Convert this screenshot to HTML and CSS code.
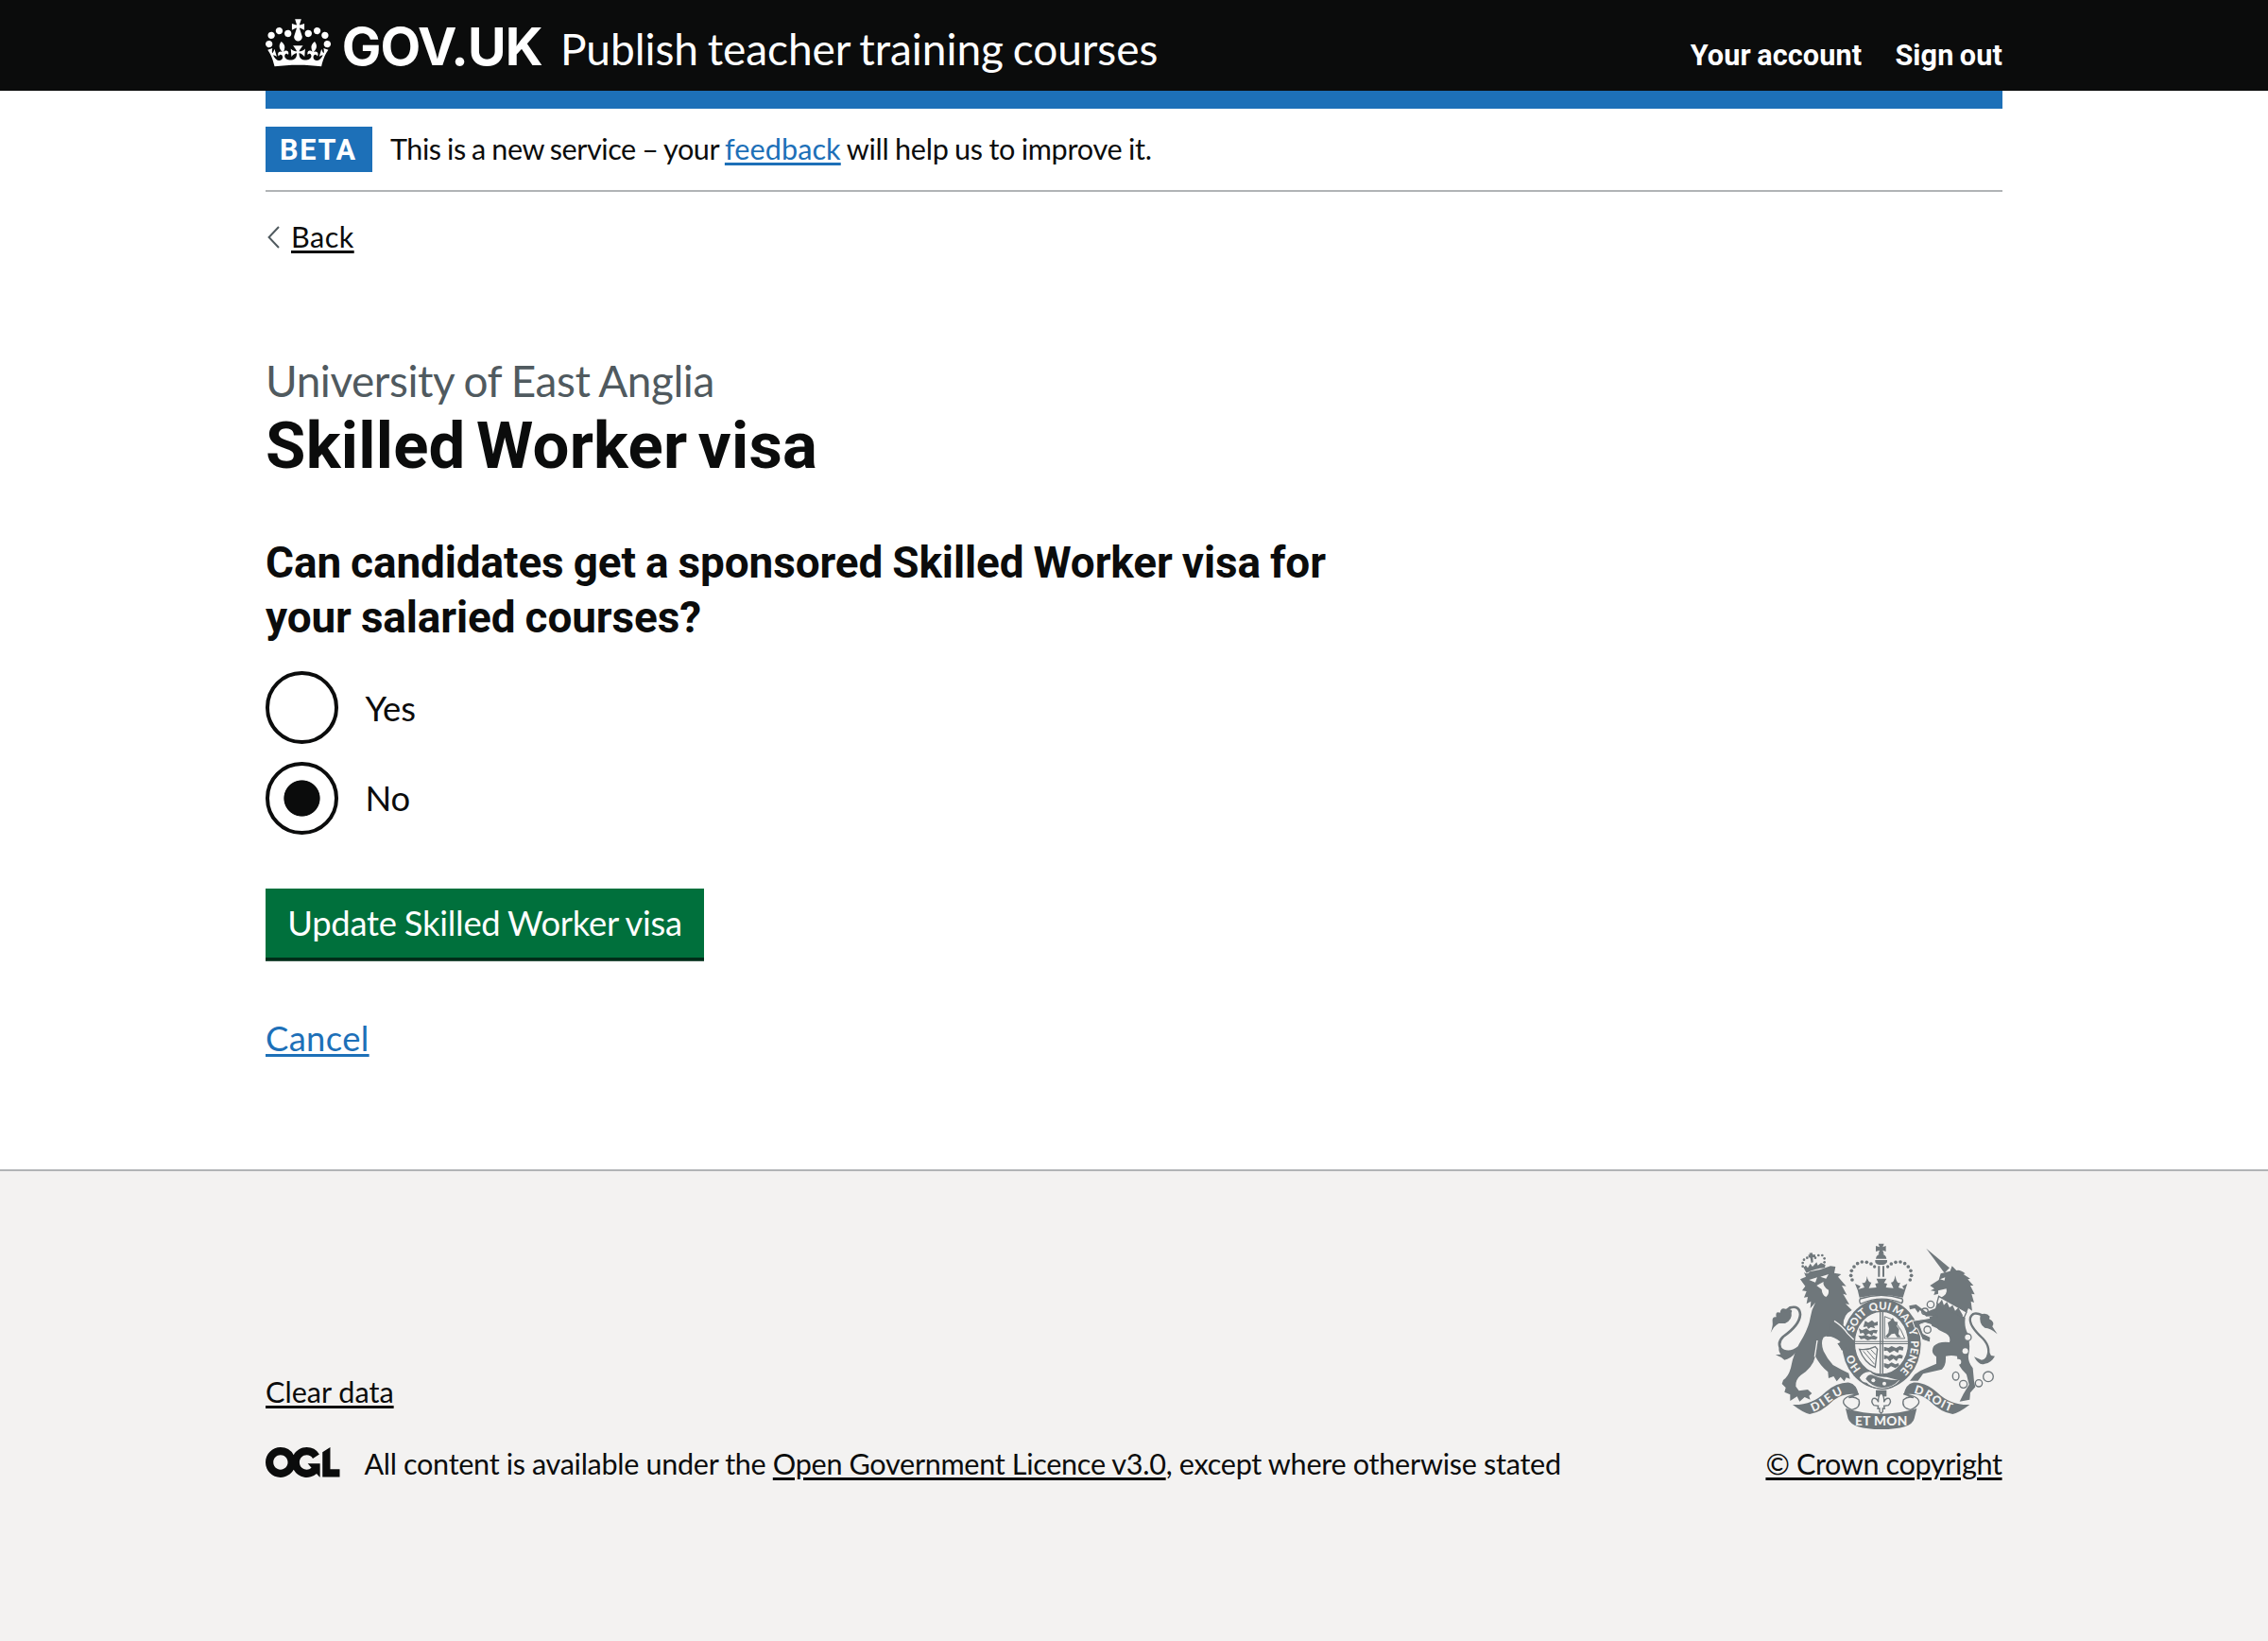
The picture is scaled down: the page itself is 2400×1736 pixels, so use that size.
FILE: index.html
```
<!DOCTYPE html>
<html lang="en">
<head>
<meta charset="utf-8">
<title>Skilled Worker visa - Publish teacher training courses - GOV.UK</title>
<link rel="stylesheet" href="styles.css">
</head>
<body>
<header class="header">
  <div class="container header-row">
    <svg class="header-crown" viewBox="0 0 132 97" aria-hidden="true"><path fill="currentColor" d="M25 30.2c3.5 1.5 7.7-.2 9.1-3.7 1.5-3.6-.2-7.8-3.9-9.2-3.6-1.4-7.6.3-9.1 3.9-1.4 3.5.3 7.5 3.9 9zM9 39.5c3.6 1.5 7.8-.2 9.2-3.7 1.5-3.6-.2-7.8-3.9-9.1-3.6-1.5-7.6.2-9.1 3.8-1.4 3.5.3 7.5 3.8 9zM4.4 57.2c3.5 1.5 7.7-.2 9.1-3.8 1.5-3.6-.2-7.7-3.9-9.1-3.5-1.5-7.6.3-9.1 3.8-1.4 3.5.3 7.6 3.9 9.1zm38.3-21.4c3.5 1.5 7.7-.2 9.1-3.8 1.5-3.6-.2-7.7-3.9-9.1-3.6-1.5-7.6.3-9.1 3.8-1.3 3.6.4 7.7 3.9 9.1zm64.4-5.6c-3.6 1.5-7.8-.2-9.1-3.7-1.5-3.6.2-7.8 3.8-9.2 3.6-1.4 7.7.3 9.2 3.9 1.3 3.5-.4 7.5-3.9 9zm15.9 9.3c-3.6 1.5-7.7-.2-9.1-3.7-1.5-3.6.2-7.8 3.7-9.1 3.6-1.5 7.7.2 9.2 3.8 1.5 3.5-.3 7.5-3.8 9zm4.7 17.7c-3.6 1.5-7.8-.2-9.2-3.8-1.5-3.6.2-7.7 3.9-9.1 3.6-1.5 7.7.3 9.2 3.8 1.3 3.5-.4 7.6-3.9 9.1zM89.3 35.8c-3.6 1.5-7.8-.2-9.2-3.8-1.4-3.6.2-7.7 3.9-9.1 3.6-1.5 7.7.3 9.2 3.8 1.4 3.6-.3 7.7-3.9 9.1zM69.7 17.7l8.9 4.7V9.3l-8.9 2.8c-.2-.3-.5-.6-.9-.9L72.4 0H59.6l3.5 11.2c-.3.3-.6.5-.9.9l-8.8-2.8v13.1l8.8-4.7c.3.3.6.7.9.9l-5 15.4v.1c-.2.8-.4 1.6-.4 2.4 0 4.1 3.1 7.5 7 8.1h.2c.3 0 .7.1 1 .1.4 0 .7 0 1-.1h.2c4-.6 7.1-4.1 7.1-8.1 0-.8-.1-1.7-.4-2.4V34l-5.1-15.4c.4-.2.7-.6 1-.9zM66 92.8c16.9 0 32.8 1.1 47.1 3.2 4-16.9 8.9-26.7 14-33.5l-9.6-3.4c1 4.9 1.1 7.2 0 10.2-1.5-1.4-3-4.3-4.2-8.7L108.6 76c2.8-2 5-3.2 7.5-3.3-4.4 9.4-10 11.9-13.6 11.2-4.3-.8-6.3-4.6-5.6-7.9 1-4.7 5.7-5.9 8-.5 4.3-8.7-3-11.4-7.6-8.8 7.1-7.2 7.9-13.5 2.1-21.1-8 6.1-8.1 12.3-4.5 20.8-4.7-5.4-12.1-2.5-9.5 6.2 3.4-5.2 7.9-2 7.2 3.1-.6 4.3-6.4 7.8-13.5 7.2-10.3-.9-10.9-8-11.2-13.8 2.5-.5 7.1 1.8 11 7.3L80.2 60c-4.1 4.4-8 5.3-12.3 5.4 1.4-4.4 8-11.6 8-11.6H55.5s6.4 7.2 7.9 11.6c-4.2-.1-8-1-12.3-5.4l1.4 16.4c3.9-5.5 8.5-7.7 10.9-7.3-.3 5.8-.9 12.8-11.1 13.8-7.2.6-12.9-2.9-13.5-7.2-.7-5 3.8-8.3 7.1-3.1 2.7-8.7-4.6-11.6-9.4-6.2 3.7-8.5 3.6-14.7-4.6-20.8-5.8 7.6-5 13.9 2.2 21.1-4.7-2.6-11.9.1-7.7 8.8 2.3-5.5 7.1-4.2 8.1.5.7 3.3-1.3 7.1-5.7 7.9-3.5.7-9-1.8-13.5-11.2 2.5.1 4.7 1.3 7.5 3.3l-4.7-15.4c-1.2 4.4-2.7 7.2-4.3 8.7-1.1-3-.9-5.3 0-10.2l-9.5 3.4c5 6.9 9.9 16.7 14 33.5 14.8-2.1 30.8-3.2 47.7-3.2z"/></svg>
    <a class="header-logotype" href="#">GOV.UK</a>
    <a class="header-service" href="#">Publish teacher training courses</a>
    <nav class="header-nav">
      <a href="#">Your account</a>
      <a href="#">Sign out</a>
    </nav>
  </div>
</header>

<div class="container">
  <div class="header-bar"></div>
  <div class="phase">
    <strong class="phase-tag">BETA</strong>
    <span class="phase-text"><span>This is a new service – your </span><a class="link" href="#">feedback</a><span class="phase-end"> will help us to improve it.</span></span>
  </div>
  <a class="back" href="#">
    <svg class="back-icon" viewBox="0 0 13 24" aria-hidden="true"><path d="M12 1 L1.6 12 L12 23" fill="none" stroke="#505a5f" stroke-width="2"/></svg>
    <span class="back-text">Back</span>
  </a>

  <main class="main">
    <span class="caption">University of East Anglia</span>
    <h1 class="heading">Skilled Worker visa</h1>
    <form>
      <fieldset class="fieldset">
        <legend class="legend">Can candidates get a sponsored Skilled Worker visa for<br>your salaried courses?</legend>
        <div class="radios">
          <label class="radio"><input class="radio-input" type="radio" name="visa"><span class="radio-label">Yes</span></label>
          <label class="radio"><input class="radio-input" type="radio" name="visa" checked><span class="radio-label">No</span></label>
        </div>
      </fieldset>
      <button class="button" type="button">Update Skilled Worker visa</button>
      <p class="cancel"><a class="link" href="#">Cancel</a></p>
    </form>
  </main>
</div>

<footer class="footer">
  <div class="container footer-row">
    <div class="footer-meta">
      <a class="footer-link clear" href="#">Clear data</a>
      <div class="licence">
        <svg class="licence-logo" viewBox="0 0 483.2 195.7" aria-hidden="true"><path fill="currentColor" d="M421.5 142.8V.1l-50.7 32.3v161.1h112.4v-50.7zm-122.3-9.6A47.12 47.12 0 0 1 221 97.8c0-26 21.1-47.1 47.1-47.1 16.7 0 31.4 8.7 39.7 21.8l42.7-27.2A97.63 97.63 0 0 0 268.1 0c-36.5 0-68.3 20.1-85.1 49.7A98 98 0 0 0 97.8 0C43.9 0 0 43.9 0 97.8s43.9 97.8 97.8 97.8c36.5 0 68.3-20.1 85.1-49.7a97.76 97.76 0 0 0 149.6 25.4l19.4 22.2h3v-87.8h-80l24.3 27.5zM97.8 145c-26 0-47.1-21.1-47.1-47.1s21.1-47.1 47.1-47.1 47.1 21.1 47.1 47.1S123.8 145 97.8 145"/></svg>
        <span class="licence-text"><span>All content is available under the </span><a class="footer-link" href="#">Open Government Licence v3.0</a><span class="licence-end">, except where otherwise stated</span></span>
      </div>
    </div>
    <div class="copyright">
      <svg class="crest" viewBox="70 40 724 600" aria-hidden="true">
        <defs>
          <path id="garter" d="M424 472 A94 109 0 0 1 424 254 A94 109 0 0 1 424 472"/>
          <path id="scroll-left" d="M206 578 C240 570 262 537 308 520"/>
          <path id="scroll-right" d="M526 520 C568 525 598 570 658 581"/>
        </defs>
        <!-- lion -->
        <g class="ink">
          <path d="M166 158 L184 150 L178 136 Q190 144 196 134 Q230 130 262 116 L278 118 L274 138 L296 142 L286 150 L312 180 L298 178 L314 208 L302 204 L322 238 L310 236 L330 256 Q302 270 303 304 L326 324 L342 352 L340 386 L326 374 L322 390 L312 374 L300 384 L284 362 L296 358 Q262 330 240 342 Q230 358 240 386 Q250 408 270 430 L296 444 L320 456 L324 474 L312 470 L306 482 L294 468 L282 482 L272 466 L256 472 L254 452 Q228 430 214 402 Q206 438 168 462 Q150 476 152 498 L162 512 L190 508 L203 520 L194 528 L198 540 L180 532 L164 546 L156 530 L134 544 L134 524 L116 516 L120 502 L108 490 L112 478 Q128 468 136 440 Q144 390 176 340 Q194 306 198 280 Q202 254 214 232 L198 250 L200 228 L186 236 L190 214 L178 216 L186 196 L172 194 L182 180 Z"/>
          <path d="M72 328 Q80 306 78 292 Q76 276 90 278 Q86 258 102 264 Q104 246 120 252 Q146 252 138 264 Q142 286 118 298 L98 298 Q84 304 72 328Z"/>
          <path d="M88 398 L104 396 Q92 378 104 372 Q126 396 160 370 L154 388 Q134 412 116 414 L106 406 Z"/>
        </g>
        <path class="line" stroke-width="8" d="M112 392 Q88 362 112 340 Q164 304 166 270 Q164 240 134 248 L116 262"/>
        <path class="paper" d="M194 160 L220 152 L214 168 Z M230 150 L256 142 L248 156 Z M218 178 L240 166 Q236 180 256 192 Q258 206 248 214 Q236 210 234 190 Z"/>
        <path class="paper-line" stroke-width="4" d="M220 352 Q216 380 212 404"/>
        <g class="ink">
          <circle cx="174" cy="106" r="4"/><circle cx="174" cy="117" r="4"/><circle cx="178" cy="96" r="4"/><circle cx="188" cy="90" r="4"/><circle cx="214" cy="90" r="4"/><circle cx="224" cy="82" r="4"/><circle cx="236" cy="82" r="4"/><circle cx="243" cy="92" r="4"/><circle cx="243" cy="104" r="4"/>
          <path d="M194 75 L204 74 L206 80 L214 80 L214 88 L206 88 L207 104 L201 106 L198 90 L192 88 L192 80 L197 80 Z"/>
          <path d="M176 120 L184 114 L190 122 L198 108 L205 118 L218 104 L222 114 L232 106 L246 112 L244 122 Q212 124 186 138 Z"/>
        </g>
        <!-- unicorn -->
        <g class="ink">
          <path d="M566 60 L640 122 L624 138 Z"/>
          <path d="M578 178 L606 160 L612 140 L642 132 L644 126 L648 116 L662 130 Q674 126 690 140 L684 142 L706 156 L698 158 L716 178 L706 178 L720 206 L710 204 L718 232 L708 228 L712 258 L700 250 L694 264 L610 218 Q636 206 630 188 L604 194 L604 204 L590 208 L594 196 L580 194 L592 188 Z"/>
          <path d="M600 234 L690 280 Q686 310 698 330 Q708 370 700 400 Q698 420 714 440 L718 482 L722 500 L706 518 L704 540 L672 546 L684 522 L702 492 L694 460 Q664 432 664 402 Q646 398 628 402 Q630 430 616 444 L556 458 L540 480 L514 480 L530 460 L548 448 L598 426 L598 404 Q578 390 590 370 Q606 354 640 358 Q646 336 620 326 Q586 312 586 280 Z"/>
          <path d="M738 270 Q758 262 768 276 L766 284 Q786 294 776 308 Q782 318 792 332 Q770 312 752 312 Q732 300 738 270Z"/>
          <path d="M718 404 L742 414 Q760 410 764 384 L772 400 L784 402 Q772 424 752 426 Q734 434 718 404Z"/>
        </g>
        <path class="line" stroke-width="7" d="M756 414 Q776 378 746 346 Q700 304 706 280 Q714 258 744 272"/>
        <path class="paper" d="M610 158 L626 152 L624 162 Z"/>
        <path class="crest-both" d="M606 212 L694 262 L686 280 L600 234 Z"/>
        <path class="ink" d="M606 236 L616 222 L622 240 L632 230 L640 248 L650 240 L658 258 L668 248 L682 272 L680 280 Z"/>
        <g class="crest-both"><circle cx="580" cy="238" r="11"/><circle cx="562" cy="260" r="10"/><circle cx="570" cy="318" r="11"/><circle cx="698" cy="342" r="11"/><ellipse cx="660" cy="465" rx="10" ry="13"/><circle cx="684" cy="491" r="12"/><circle cx="733" cy="488" r="11"/><circle cx="763" cy="467" r="16"/></g>
        <g class="paper"><circle cx="690" cy="386" r="9"/><circle cx="668" cy="420" r="9"/></g>
        <!-- garter and shield -->
        <ellipse class="ink" cx="424" cy="363" rx="125" ry="143"/>
        <g class="crest-letters" font-size="34">
          <text text-anchor="middle"><textPath href="#garter" startOffset="100">HO</textPath></text>
          <text text-anchor="middle"><textPath href="#garter" startOffset="233">SOIT</textPath></text>
          <text text-anchor="middle"><textPath href="#garter" startOffset="314">QUI</textPath></text>
          <text text-anchor="middle"><textPath href="#garter" startOffset="388">MAL</textPath></text>
          <text text-anchor="middle"><textPath href="#garter" startOffset="443">Y</textPath></text>
          <text text-anchor="middle"><textPath href="#garter" startOffset="521">PENSE</textPath></text>
        </g>
        <ellipse class="crest-both" cx="424" cy="360" rx="86" ry="100"/>
        <g class="ink">
          <path d="M418 262 h4 v196 h-4z M426 262 h4 v196 h-4z M340 354 h168 v3 h-168z M340 361 h168 v3 h-168z"/>
          <path d="M372 290 l10 6 12-8 8 8 10-4 0 12-12 2 4 8-14-4-8 6-4-8-12 2z M352 314 l10 6 14-6 10 8 14-4 12 2-4 10-10-2-4 10-10-8-12 6-6-8-10 2z M350 336 l12 2 12-4 12 6 14-4 12 6-6 8-14-2-12 4-10-6-12 2z"/>
          <path d="M444 296 l8-6 8-10 6 12 10 2-4 12 8 10-2 16 8 10-12 0-8-12-10 2-12 12-8-4 10-12 2-14z"/>
          <path d="M432 372 l14 4 10-6 14 6 12-6 12 4-2 10-12-2-4 10-12-8-14 8-8-8-10 2z M432 398 l14 4 10-6 14 6 12-6 10 4-2 10-12-2-6 10-10-8-12 8-8-8-10 2z M432 424 l14 4 10-6 12 6 10-4 2 8-12 8-14-6-10 8-12-6z"/>
        </g>
        <path class="line" stroke-width="4" d="M354 380 Q380 384 404 372 L411 380 L404 438 Q370 424 354 380Z"/>
        <path class="line" stroke-width="3" d="M366 386 L402 428 M378 384 L402 412 M390 381 L406 398"/>
        <path class="line" stroke-width="3" d="M434 276 Q476 286 498 346 H434 Z"/>
        <!-- forepaw and hooves laid over the garter -->
        <path class="ink" d="M264 292 Q296 308 312 330 L332 350 L336 384 L326 374 L320 388 L310 374 L298 384 L288 364 L296 352 Q280 336 250 340 Z"/>
        <path class="paper-line" stroke-width="4" d="M274 290 Q302 308 316 330 L336 350"/>
        <g class="ink">
          <path d="M512 242 L534 238 L566 262 L596 250 L604 274 L566 276 L546 256 L540 264 L530 250 L514 254 Z"/>
          <path class="crest-over" d="M522 290 L548 286 L586 280 L594 306 L562 296 L546 302 L556 330 L580 342 L578 358 L554 350 L538 314 L530 312 Z"/>
          <path d="M576 278 L600 270 L606 316 L584 306 Z"/>
        </g>
        <!-- buckle and strap -->
        <path class="crest-both" d="M352 470 Q366 446 390 450 Q402 468 440 466 L486 478 Q460 508 424 506 Q388 502 376 488 Q360 488 352 470Z"/>
        <path class="ink" d="M374 474 Q384 454 400 464 Q430 478 480 478 Q456 504 424 502 Q392 498 374 474Z"/>
        <g class="paper"><circle cx="398" cy="479" r="6"/><circle cx="433" cy="489" r="6"/></g>
        <!-- crown -->
        <g class="ink">
          <path d="M414 45 h18 l-4 11 10-4 v18 l-10-4 4 12 h-18 l4-12 -12 4 v-18 l12 4z M423 77 Q438 80 440 93 H406 Q408 80 423 77Z M404 97 h38 v7 q-6 8-12 8 h-14 q-8 0-12-8z M413 116 h6 v34 h-6z M427 116 h6 v34 h-6z"/>
          <path d="M340 172 L358 180 L350 190 L370 184 L362 168 Q376 176 378 148 Q382 170 392 168 L384 186 L408 184 L404 172 L414 170 L408 156 L440 156 L432 170 L442 172 L438 184 L462 186 L454 168 Q464 170 468 146 Q472 176 484 168 L478 184 L496 190 L490 180 L506 172 Q500 190 492 216 Q424 202 354 216 Q350 192 340 172Z"/>
          <circle cx="331" cy="160" r="5.5"/><circle cx="327" cy="146" r="5.5"/><circle cx="329" cy="131" r="5.5"/><circle cx="337" cy="118" r="5.5"/><circle cx="348" cy="108" r="5.5"/><circle cx="362" cy="103" r="5.5"/><circle cx="377" cy="104" r="5.5"/><circle cx="391" cy="109" r="5.5"/><circle cx="402" cy="118" r="5"/>
          <circle cx="515" cy="160" r="5.5"/><circle cx="519" cy="146" r="5.5"/><circle cx="517" cy="131" r="5.5"/><circle cx="509" cy="118" r="5.5"/><circle cx="498" cy="108" r="5.5"/><circle cx="484" cy="103" r="5.5"/><circle cx="469" cy="104" r="5.5"/><circle cx="455" cy="109" r="5.5"/><circle cx="444" cy="118" r="5"/>
        </g>
        <path class="crest-both" d="M356 220 Q424 198 490 220 Q494 228 488 234 Q424 206 358 236 Q352 228 356 220Z"/>
        <!-- motto scroll -->
        <path class="crest-both" d="M352 522 Q296 530 304 552 Q312 566 330 572 Q360 566 352 540 Q338 528 320 534 Z M494 522 Q550 530 542 552 Q534 566 516 572 Q486 566 494 540 Q508 528 526 534 Z"/>
        <path class="ink" d="M142 556 Q204 558 246 516 Q284 484 322 486 Q344 490 352 524 L330 522 Q296 522 272 542 Q232 582 196 586 Q176 582 142 556Z"/>
        <path class="ink" d="M704 556 Q642 558 600 516 Q562 484 524 486 Q502 490 494 524 L516 522 Q550 522 574 542 Q614 582 650 586 Q670 582 704 556Z"/>
        <path class="ink" d="M310 568 Q424 602 536 568 L528 600 Q520 634 423 634 Q330 634 318 600 Z"/>
        <g class="crest-letters" font-size="37">
          <text><textPath href="#scroll-left" textLength="112">DIEU</textPath></text>
          <text><textPath href="#scroll-right" textLength="132">DROIT</textPath></text>
          <text x="423" y="623" font-size="41" text-anchor="middle" textLength="166">ET MON</text>
        </g>
        <path class="ink" d="M406 510 h34 v20 h-34z"/>
        <path class="crest-both" d="M423 518 Q434 530 432 548 Q436 534 448 536 Q458 546 446 558 L432 560 L434 568 H428 L428 578 L423 584 L418 578 V568 H412 L414 560 L400 558 Q388 546 398 536 Q410 534 414 548 Q412 530 423 518Z"/>
      </svg>
      <a class="footer-link crown-link" href="#">© Crown copyright</a>
    </div>
  </div>
</footer>
</body>
</html>
```
FILE: styles.css
```
* { box-sizing: border-box; }

body {
  margin: 0;
  min-height: 1736px;
  display: flex;
  flex-direction: column;
  background: #fff;
  color: #0b0c0c;
  font-family: Lato, Roboto, sans-serif;
  font-size: 30.6px;
  line-height: 47.8px;
}

.container { width: 1838px; margin: 0 auto; }

.link { color: #1d70b8; }

.link,
.back-text,
.footer-link {
  text-decoration: underline;
  text-decoration-thickness: 2.6px;
  text-underline-offset: 2.8px;
}

/* Header */
.header { height: 95.7px; background: #0b0c0c; color: #fff; }
.header-row { display: flex; align-items: baseline; padding-top: 23.6px; }
.header a { color: #fff; text-decoration: none; line-height: 50px; white-space: pre; }
.header-crown { width: 69px; height: 51px; align-self: flex-start; margin-top: -3.3px; }
.header-logotype { margin-left: 11.7px; width: 231.3px; font: 700 55.5px Inter, sans-serif; letter-spacing: -.9px; }
.header-service { font-size: 46px; letter-spacing: -.05px; word-spacing: -2px; }
.header-nav { display: flex; gap: 35px; margin-left: auto; font: 700 30.6px Roboto, sans-serif; letter-spacing: .15px; word-spacing: -1.5px; }

/* Phase banner */
.header-bar { height: 19.3px; background: #1d70b8; }
.phase { display: flex; align-items: flex-start; gap: 19px; padding: 19px 0; border-bottom: 2px solid #b1b4b6; }
.phase-tag { width: 113px; height: 48px; padding-left: 15px; background: #1d70b8; color: #fff; font: 700 30.6px/49px Roboto, sans-serif; letter-spacing: 1.7px; }
.phase-text { padding-top: .5px; letter-spacing: -.45px; word-spacing: -1px; line-height: 47px; white-space: pre; }
.phase-text .link { letter-spacing: .09px; }
.phase-end { letter-spacing: -.27px; }

.back { display: flex; width: max-content; align-items: center; margin-top: 23.8px; color: #0b0c0c; text-decoration: none; letter-spacing: .45px; }
.back-icon { width: 13px; height: 24px; margin: 0 12px 0 2px; }

/* Page content */
.main { padding-top: 99.4px; }
.caption { display: block; margin-bottom: 3px; color: #505a5f; font-size: 45.9px; line-height: 57.4px; letter-spacing: -.42px; word-spacing: -1px; }
.heading { margin: 0 0 56.2px; font: 700 68.9px/76.6px Roboto, sans-serif; letter-spacing: .25px; word-spacing: -6px; }
.fieldset { margin: 0; padding: 0; border: 0; min-width: 0; }
.legend { padding: 0; font: 700 45.9px/57.6px Roboto, sans-serif; letter-spacing: -.1px; word-spacing: -1.2px; }
.radios { display: flex; flex-direction: column; gap: 19.2px; margin-top: 27.9px; }
.radio { display: flex; align-items: center; gap: 29px; height: 76.6px; font-size: 36.4px; }
.radio-input {
  appearance: none;
  width: 76.6px;
  height: 76.6px;
  margin: 0;
  border: 4px solid #0b0c0c;
  border-radius: 50%;
}
.radio-input:checked { background: radial-gradient(circle, #0b0c0c 18.7px, transparent 19.5px); }
.radio-label { padding-top: 1.8px; letter-spacing: -.2px; }
.button {
  display: block;
  width: 464px;
  height: 73.4px;
  margin: 57.2px 0 0;
  padding: 1.6px 0 0;
  border: 0;
  background: #00703c;
  box-shadow: 0 3.8px 0 #002d18;
  color: #fff;
  font: 400 36.4px/47.8px Lato, sans-serif;
  letter-spacing: -.25px;
  word-spacing: -1px;
}
.cancel { margin: 61.4px 0 114.3px; font-size: 36.4px; letter-spacing: .35px; }

/* Footer */
.footer { flex: 1; padding-top: 75.6px; border-top: 2px solid #b1b4b6; background: #f3f2f1; }
.footer-row { display: flex; justify-content: space-between; align-items: flex-end; }
.footer-link { color: #0b0c0c; }
.footer-meta { display: flex; flex-direction: column; align-items: flex-start; gap: 28.8px; }
.licence { display: flex; }
.licence-logo { width: 78.5px; height: 32px; margin: 5.4px 26px 0 0; }
.licence-text { letter-spacing: -.3px; word-spacing: -.2px; white-space: pre; }
.licence-end { letter-spacing: -.26px; }
.copyright { display: flex; flex-direction: column; align-items: center; width: 251px; }
.crest { width: 241.3px; height: 200px; margin-bottom: 11px; }
.crown-link { letter-spacing: -.38px; white-space: nowrap; }

.ink { fill: #6f777b; }
.paper { fill: #f3f2f1; }
.line { fill: none; stroke: #6f777b; }
.paper-line { fill: none; stroke: #f3f2f1; }
.crest-both { fill: #f3f2f1; stroke: #6f777b; stroke-width: 4px; }
.crest-over { stroke: #f3f2f1; stroke-width: 3px; }
.crest-letters { fill: #f3f2f1; font-family: Lato, sans-serif; font-weight: 900; }
```
